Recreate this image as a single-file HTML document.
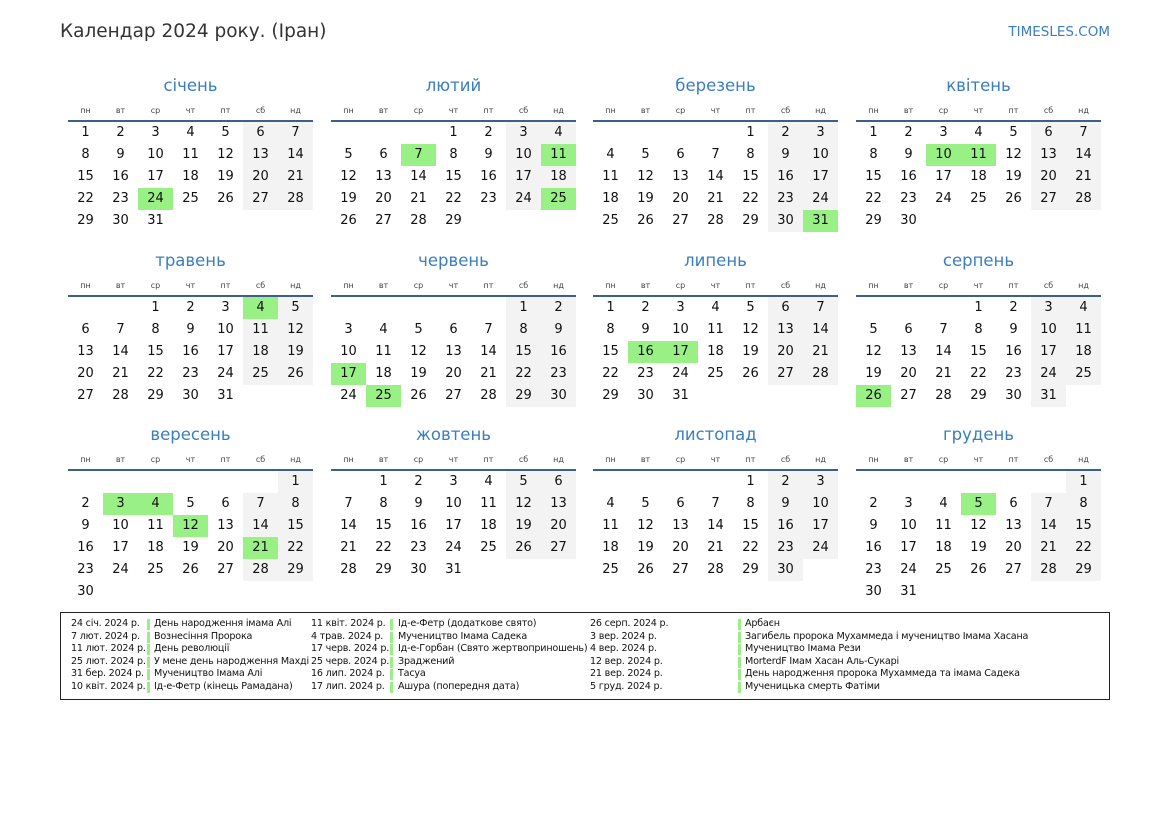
<!DOCTYPE html><html><head><meta charset="utf-8"><style>
body{margin:0;width:1169px;height:827px;background:#fff;font-family:"DejaVu Sans","Liberation Sans",sans-serif;position:relative;overflow:hidden;color:#111}
.a{position:absolute}
.t{font-size:16.5px;color:#3a7ec0;text-align:center;width:245px}
.w{font-size:8px;color:#444;text-align:center;width:35px}
.d{font-size:13px;text-align:center;width:35px;height:22px;line-height:22px}
.g{background:#f3f3f3}.h{background:#99f185}
.ln{height:2px;background:#3d5f8c;width:245px}
.lg{font-size:9.6px;line-height:12.6px;color:#111;white-space:nowrap}
.bar{width:3px;height:11px;background:#99f185}
</style></head><body>
<div class="a" style="left:60px;top:21px;font-size:18.5px;color:#333">Календар 2024 року. (Іран)</div>
<div class="a" style="right:59px;top:24px;font-size:13.5px;color:#3a7ec0">TIMESLES.COM</div>
<div id="c"></div>
<div class="a" style="left:60px;top:612px;width:1048px;height:86px;border:1px solid #222"></div>
<div id="l"></div>
<script>
var names=["січень","лютий","березень","квітень","травень","червень","липень","серпень","вересень","жовтень","листопад","грудень"];
var wd=["пн","вт","ср","чт","пт","сб","нд"];
var st=[0,3,4,0,2,5,0,3,6,1,4,6],len=[31,29,31,30,31,30,31,31,30,31,30,31];
var hl={0:[24],1:[7,11,25],2:[31],3:[10,11],4:[4],5:[17,25],6:[16,17],7:[26],8:[3,4,12,21],11:[5]};
var xs=[68,331,593,856],ys=[0,175,349],h="";
for(var m=0;m<12;m++){var x=xs[m%4],y=ys[Math.floor(m/4)];
h+='<div class="a t" style="left:'+x+'px;top:'+(76+y)+'px">'+names[m]+'</div>';
for(var i=0;i<7;i++)h+='<div class="a w" style="left:'+(x+i*35)+'px;top:'+(106+y)+'px">'+wd[i]+'</div>';
h+='<div class="a ln" style="left:'+x+'px;top:'+(120+y)+'px"></div>';
for(var d=1;d<=len[m];d++){var p=st[m]+d-1,c=p%7,r=Math.floor(p/7);
var cls=(hl[m]&&hl[m].indexOf(d)>=0)?" h":(c>=5?" g":"");
h+='<div class="a d'+cls+'" style="left:'+(x+c*35)+'px;top:'+(122+y+r*22)+'px">'+d+'</div>';}}
document.getElementById("c").innerHTML=h;
var L=[["24 січ. 2024 р.","День народження імама Алі"],["7 лют. 2024 р.","Вознесіння Пророка"],["11 лют. 2024 р.","День революції"],["25 лют. 2024 р.","У мене день народження Махді"],["31 бер. 2024 р.","Мучеництво Імама Алі"],["10 квіт. 2024 р.","Ід-е-Фетр (кінець Рамадана)"],
["11 квіт. 2024 р.","Ід-е-Фетр (додаткове свято)"],["4 трав. 2024 р.","Мучеництво Імама Садека"],["17 черв. 2024 р.","Ід-е-Горбан (Свято жертвоприношень)"],["25 черв. 2024 р.","Зраджений"],["16 лип. 2024 р.","Тасуа"],["17 лип. 2024 р.","Ашура (попередня дата)"],
["26 серп. 2024 р.","Арбаєн"],["3 вер. 2024 р.","Загибель пророка Мухаммеда і мучеництво Імама Хасана"],["4 вер. 2024 р.","Мучеництво Імама Рези"],["12 вер. 2024 р.","MorterdF Імам Хасан Аль-Сукарі"],["21 вер. 2024 р.","День народження пророка Мухаммеда та імама Садека"],["5 груд. 2024 р.","Мученицька смерть Фатіми"]];
var cx=[[71,147,154],[311,390,398],[590,738,745]],g="";
for(var k=0;k<18;k++){var col=cx[Math.floor(k/6)],r=k%6,yy=618+r*12.6;
g+='<div class="a lg" style="left:'+col[0]+'px;top:'+yy+'px;letter-spacing:-0.2px">'+L[k][0]+'</div>';
g+='<div class="a bar" style="left:'+col[1]+'px;top:'+(yy+1)+'px"></div>';
g+='<div class="a lg" style="left:'+col[2]+'px;top:'+yy+'px;letter-spacing:-0.2px">'+L[k][1]+'</div>';}
document.getElementById("l").innerHTML=g;
</script></body></html>
